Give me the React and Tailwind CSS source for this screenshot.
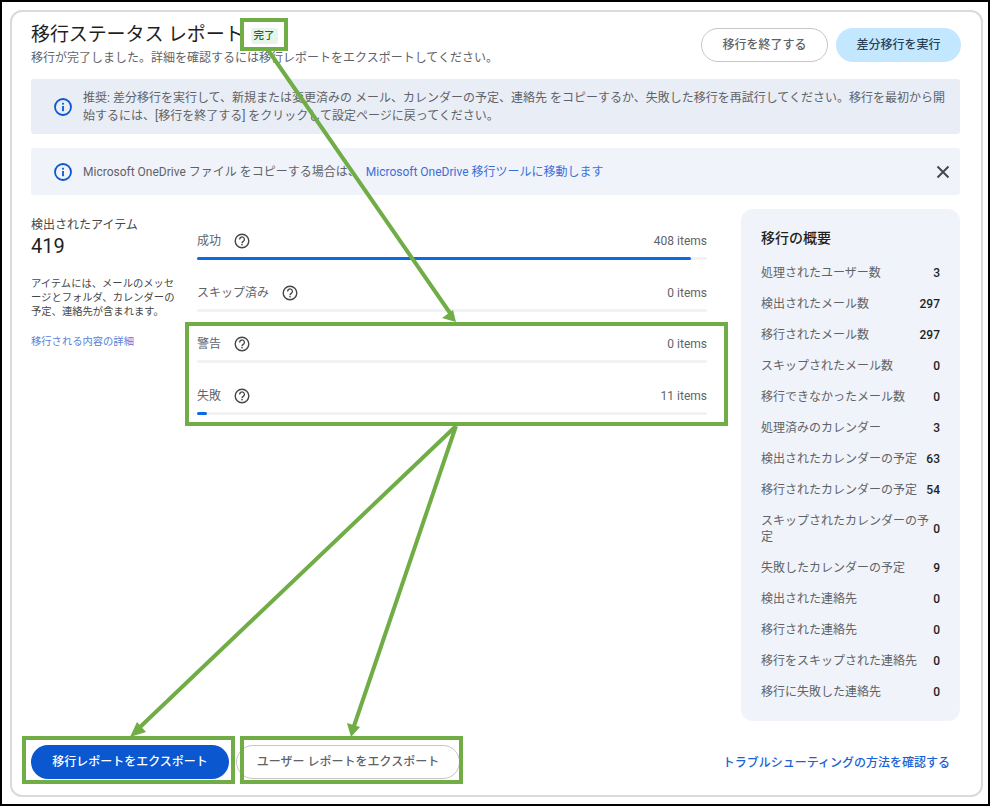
import React from "react";

const font = "font-['Roboto','Noto_Sans_CJK_JP',sans-serif]";

const progress = [
  { label: "成功", count: "408 items", pct: 96.8 },
  { label: "スキップ済み", count: "0 items", pct: 0 },
  { label: "警告", count: "0 items", pct: 0 },
  { label: "失敗", count: "11 items", pct: 2 },
];

const summary = [
  ["処理されたユーザー数", "3"],
  ["検出されたメール数", "297"],
  ["移行されたメール数", "297"],
  ["スキップされたメール数", "0"],
  ["移行できなかったメール数", "0"],
  ["処理済みのカレンダー", "3"],
  ["検出されたカレンダーの予定", "63"],
  ["移行されたカレンダーの予定", "54"],
  ["スキップされたカレンダーの予定", "0"],
  ["失敗したカレンダーの予定", "9"],
  ["検出された連絡先", "0"],
  ["移行された連絡先", "0"],
  ["移行をスキップされた連絡先", "0"],
  ["移行に失敗した連絡先", "0"],
];

// Circle with an "i", same outline as the alert icon
const InfoIcon = () => (
  <svg width="20" height="20" viewBox="0 0 20 20" fill="none" className="shrink-0">
    <circle cx="10" cy="10" r="8" stroke="#0b57d0" strokeWidth="1.8" />
    <rect x="9.1" y="9" width="1.8" height="5.2" fill="#0b57d0" />
    <rect x="9.1" y="5.8" width="1.8" height="1.8" fill="#0b57d0" />
  </svg>
);

const HelpIcon = () => (
  <svg width="16" height="16" viewBox="0 0 16 16" fill="none" className="shrink-0">
    <circle cx="8" cy="8" r="6.8" stroke="#444746" strokeWidth="1.4" />
    <path d="M5.6 6.4a2.4 2.4 0 1 1 3.7 2c-.8.5-1.3.9-1.3 1.8" stroke="#444746" strokeWidth="1.3" />
    <rect x="7.3" y="11" width="1.4" height="1.4" fill="#444746" />
  </svg>
);

const CloseIcon = () => (
  <svg width="14" height="14" viewBox="0 0 14 14" fill="none">
    <path d="M1.5 1.5l11 11M12.5 1.5l-11 11" stroke="#444746" strokeWidth="1.9" />
  </svg>
);

const ProgressRow = ({ label, count, pct }) => (
  <div className="h-[51.5px]">
    <div className="flex items-center justify-between h-[24px] text-[12px] text-[#5f6368]">
      <div className="flex items-center">
        <span>{label}</span>
        <span className="ml-[13px]">
          <HelpIcon />
        </span>
      </div>
      <span>{count}</span>
    </div>
    <div className="mt-[4px] h-[3px] rounded-full bg-[#f0f2f4]">
      {pct > 0 && <div className="h-full rounded-full bg-[#0a6ae8]" style={{ width: pct + "%" }} />}
    </div>
  </div>
);

const SummaryRow = ({ label, value }) => (
  <div className="flex items-center justify-between gap-[1px] py-[7.5px] text-[12px] leading-[16px]">
    <span className="text-[#5f6368]">{label}</span>
    <span className="shrink-0 font-medium text-[#1f1f1f]">{value}</span>
  </div>
);

export default function App() {
  return (
    <div className={`${font} relative w-[990px] h-[806px] overflow-hidden bg-white border-2 border-black p-[8px]`}>
      <div className="h-[787px] w-[973px] rounded-[12px] border-2 border-[#dadada] bg-white pt-[9px] pl-[19px] pr-[20px]">
        {/* header */}
        <div className="flex justify-between">
          <div>
            <div className="flex items-center h-[29px]">
              <h1 className="text-[19px] font-normal text-[#1f1f1f] tracking-[-0.1px]">移行ステータス レポート</h1>
              <span className="ml-[7px] rounded-[3px] bg-[#e6f4ea] px-[3px] text-[10.5px] leading-[16px] font-medium text-[#146c2e]">完了</span>
            </div>
            <p className="text-[12px] leading-[16px] text-[#5f6368]">移行が完了しました。詳細を確認するには移行レポートをエクスポートしてください。</p>
          </div>
          <div className="flex gap-[8px] mt-[7px]">
            <button className="w-[127px] h-[34px] rounded-full border border-[#c4c7c5] bg-white text-[12px] font-medium text-[#5f6368]">移行を終了する</button>
            <button className="w-[125px] h-[34px] rounded-full bg-[#c2e7ff] text-[12px] font-medium text-[#2a3f55]">差分移行を実行</button>
          </div>
        </div>

        {/* alerts */}
        <div className="mt-[13px] flex items-center gap-[10px] h-[55px] w-[929px] rounded-[3px] bg-[#e9edf6] pl-[22px] pr-[10px] text-[12px] leading-[18px] text-[#5f6368]">
          <InfoIcon />
          <p>推奨: 差分移行を実行して、新規または変更済みの メール、カレンダーの予定、連絡先 をコピーするか、失敗した移行を再試行してください。移行を最初から開始するには、[移行を終了する] をクリックして設定ページに戻ってください。</p>
        </div>
        <div className="mt-[14px] flex items-center justify-between h-[47px] w-[929px] rounded-[3px] bg-[#f0f3f9] pl-[22px] pr-[10px] text-[12px] text-[#5f6368]">
          <div className="flex items-center gap-[10px]">
            <InfoIcon />
            <p>
              Microsoft OneDrive ファイル をコピーする場合は、
              <a className="ml-[6px] text-[#3b6fd8]">Microsoft OneDrive 移行ツールに移動します</a>
            </p>
          </div>
          <CloseIcon />
        </div>

        {/* main */}
        <div className="mt-[14px] flex">
          <div className="w-[145px] shrink-0 pt-[8px]">
            <div className="text-[12px] leading-[16px] text-[#444746]">検出されたアイテム</div>
            <div className="text-[20px] leading-[24px] text-[#1f1f1f] mt-[1px]">419</div>
            <p className="mt-[19px] text-[10.3px] leading-[14px] text-[#444746]">アイテムには、メールのメッセージとフォルダ、カレンダーの予定、連絡先が含まれます。</p>
            <a className="block mt-[16px] text-[10.3px] leading-[14px] text-[#5a80d8]">移行される内容の詳細</a>
          </div>
          <div className="ml-[21px] w-[510px] shrink-0 pt-[20px]">
            {progress.map((p) => (
              <ProgressRow key={p.label} {...p} />
            ))}
          </div>
          <div className="ml-[34px] w-[219px] h-[512px] shrink-0 rounded-[12px] bg-[#f0f3f9] px-[20px] pt-[19px]">
            <h2 className="text-[14px] leading-[20px] font-medium text-[#1f1f1f] mb-[9px]">移行の概要</h2>
            {summary.map(([label, value]) => (
              <SummaryRow key={label} label={label} value={value} />
            ))}
          </div>
        </div>

        {/* footer */}
        <div className="mt-[24px] flex items-center">
          <button className="w-[198px] h-[34px] rounded-full bg-[#0b57d0] text-[12px] font-medium text-white">移行レポートをエクスポート</button>
          <button className="ml-[7px] w-[224px] h-[34px] rounded-full border border-[#c4c7c5] bg-white text-[12px] font-medium text-[#5f6368]">ユーザー レポートをエクスポート</button>
          <a className="ml-auto mr-[11px] pt-[1px] text-[12px] font-medium text-[#1a62d6]">トラブルシューティングの方法を確認する</a>
        </div>
      </div>

      {/* green annotations drawn on top of the screenshot */}
      <div className="absolute left-[238px] top-[16px] w-[48px] h-[33px] border-4 border-[#70ad47]" />
      <div className="absolute left-[183px] top-[320px] w-[543px] h-[104px] border-4 border-[#70ad47]" />
      <div className="absolute left-[20px] top-[734px] w-[213px] h-[48px] border-4 border-[#70ad47]" />
      <div className="absolute left-[238px] top-[734px] w-[223px] h-[48px] border-4 border-[#70ad47]" />
      <svg className="absolute left-[-2px] top-[-2px]" width="990" height="806" fill="none">
        <path d="M268 50L450 313M456 426L138 729M456 426L354 726" stroke="#70ad47" strokeWidth="4" />
        <path d="M456 322L442 318L453 310ZM130 737L137 722L146 732ZM351 737L347 723L360 727Z" fill="#70ad47" />
      </svg>
    </div>
  );
}
